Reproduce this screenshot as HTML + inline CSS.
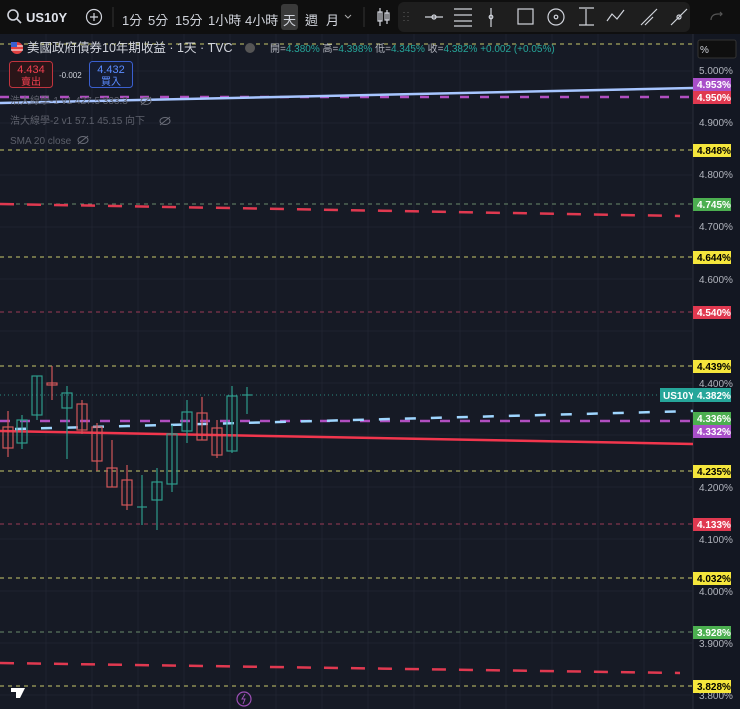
<!DOCTYPE html>
<html><head><meta charset="utf-8"><style>
body{margin:0;width:740px;height:709px;overflow:hidden;background:#0f0f0f;font-family:"Liberation Sans","Noto Sans CJK TC",sans-serif;}
.tb{position:absolute;left:0;top:0;width:740px;height:34px;background:#0f0f0f;color:#d1d4dc;font-size:13px}
.tb span{position:absolute;top:10px}
</style></head><body>
<div class="tb">
<svg width="740" height="34" style="position:absolute;left:0;top:0">
<circle cx="13" cy="15" r="5" fill="none" stroke="#d1d4dc" stroke-width="1.6"/><line x1="17" y1="19" x2="21" y2="23" stroke="#d1d4dc" stroke-width="1.6"/>
<circle cx="94" cy="17" r="7.5" fill="none" stroke="#d1d4dc" stroke-width="1.2"/><path d="M94 13v8M90 17h8" stroke="#d1d4dc" stroke-width="1.2"/>
<line x1="113" y1="7" x2="113" y2="27" stroke="#333" />
<rect x="281" y="4" width="17" height="26" rx="3" fill="#3a3a3a"/>
<path d="M345 15l3 3 3-3" stroke="#aaa" fill="none"/>
<line x1="364" y1="7" x2="364" y2="27" stroke="#333"/>
<path d="M380 8v18M378 12h4v9h-4z M387 10v14M385 13h4v7h-4z" stroke="#d1d4dc" fill="none" stroke-width="1.2"/>
<rect x="398" y="2" width="292" height="30" rx="6" fill="#1e1e1e"/>
<g stroke="#d1d4dc" fill="none" stroke-width="1.2">
<path d="M404 12v1M404 16v1M404 20v1M408 12v1M408 16v1M408 20v1" stroke="#555"/>
<path d="M425 17h18"/><circle cx="434" cy="17" r="2"/>
<path d="M454 9h18M454 15h18M454 21h18M454 26h18"/>
<path d="M491 8v19"/><circle cx="491" cy="17" r="1.8"/>
<rect x="518" y="9" width="15" height="15"/>
<circle cx="556" cy="17" r="8"/><circle cx="556" cy="17" r="1.8"/>
<path d="M579 8h15M586 9v16M579 25h15"/>
<path d="M607 21l5-7 5 5 7-9"/>
<path d="M641 25l16-16M645 25l8-8"/>
<path d="M671 25l16-16"/><circle cx="679" cy="17" r="2"/>
<path d="M711 20c0-4 3-6 7-6h4M720 12l2 2-2 2" stroke="#555"/>
</g>
</svg>
<span style="left:26px;font-weight:bold;color:#e0e3eb">US10Y</span>
<span style="left:122px">1分</span><span style="left:148px">5分</span><span style="left:175px">15分</span><span style="left:208px">1小時</span><span style="left:245px">4小時</span><span style="left:283px">天</span><span style="left:305px">週</span><span style="left:326px">月</span>
</div>
<svg width="740" height="675" style="position:absolute;left:0;top:34px" viewBox="0 34 740 675" font-family="Liberation Sans,Noto Sans CJK TC,sans-serif">
<rect x="0" y="34" width="740" height="675" fill="#161a25"/>
<rect x="693" y="34" width="47" height="675" fill="#131722"/>
<line x1="693" y1="34" x2="693" y2="709" stroke="#2a2e39"/>
<g stroke="#1f2330">
<path d="M46 34v675M92 34v675M138 34v675M184 34v675M230 34v675M276 34v675M322 34v675M368 34v675M414 34v675M460 34v675M506 34v675M552 34v675M598 34v675M644 34v675"/>
<path d="M0 71h693M0 123h693M0 175h693M0 227h693M0 279h693M0 331h693M0 383h693M0 435h693M0 487h693M0 539h693M0 591h693M0 643h693M0 695h693"/>
</g>
<g stroke-dasharray="4 4" stroke-width="1">
<path d="M0 44h693M0 150h693M0 257h693M0 366h693M0 471h693M0 578h693M0 686h693" stroke="#c8c86a"/>
<path d="M0 204h693M0 632h693" stroke="#6a8a6a"/>
<path d="M0 312h693M0 524h693" stroke="#9a3a55"/>
</g>
<line x1="0" y1="395" x2="693" y2="395" stroke="#2a8a80" stroke-dasharray="1 3"/>
<path d="M0 97h693" stroke="#b04ec0" stroke-width="2.5" stroke-dasharray="9 11"/>
<path d="M0 103L693 88" stroke="#a7c5ff" stroke-width="2.5"/>
<path d="M0 204L680 216" stroke="#e03950" stroke-width="2.5" stroke-dasharray="14 13"/>
<path d="M0 663L680 673" stroke="#e03950" stroke-width="2.5" stroke-dasharray="14 13"/>
<path d="M0 421h693" stroke="#b04ec0" stroke-width="2.5" stroke-dasharray="10 10"/>
<path d="M0 431L693 444" stroke="#f2364d" stroke-width="2.5"/>
<path d="M15 429L693 411" stroke="#9fd6ff" stroke-width="2.5" stroke-dasharray="11 15"/>
<g fill="none" stroke-width="1.2">
<g stroke="#d0575a">
<path d="M8 411v46"/><rect x="3" y="427" width="10" height="21"/>
<path d="M52 366v34"/><rect x="47" y="383" width="10" height="2"/>
<path d="M82 400v34"/><rect x="77" y="404" width="10" height="26"/>
<path d="M97 423v48"/><rect x="92" y="427" width="10" height="34"/>
<path d="M112 440v47"/><rect x="107" y="468" width="10" height="19"/>
<path d="M127 465v45"/><rect x="122" y="480" width="10" height="25"/>
<path d="M202 397v43"/><rect x="197" y="413" width="10" height="27"/>
<path d="M217 420v38"/><rect x="212" y="428" width="10" height="27"/>
</g>
<g stroke="#2f9b8c">
<path d="M22 415v34"/><rect x="17" y="420" width="10" height="23"/>
<path d="M37 376v44"/><rect x="32" y="376" width="10" height="39"/>
<path d="M67 386v73"/><rect x="62" y="393" width="10" height="15"/>
<path d="M142 475v50"/><path d="M137 507h10"/>
<path d="M157 468v62"/><rect x="152" y="482" width="10" height="18"/>
<path d="M172 425v67"/><rect x="167" y="434" width="10" height="50"/>
<path d="M187 400v43"/><rect x="182" y="412" width="10" height="19"/>
<path d="M232 386v67"/><rect x="227" y="396" width="10" height="55"/>
<path d="M247 387v27"/><path d="M242 395h10"/>
</g>
</g>
<g font-size="10" fill="#b2b5be">
<text x="699" y="74">5.000%</text><text x="699" y="126">4.900%</text><text x="699" y="178">4.800%</text><text x="699" y="230">4.700%</text><text x="699" y="283">4.600%</text><text x="699" y="387">4.400%</text><text x="699" y="491">4.200%</text><text x="699" y="543">4.100%</text><text x="699" y="595">4.000%</text><text x="699" y="647">3.900%</text><text x="699" y="699">3.800%</text>
</g>
<rect x="698" y="40" width="38" height="18" rx="2" fill="#0f0f0f" stroke="#333"/><text x="700" y="53" font-size="10" fill="#d1d4dc">%</text>
<g font-size="10" font-weight="bold">
<rect x="693" y="78" width="38" height="13" fill="#a94fc9"/><text x="697" y="88" fill="#fff">4.953%</text>
<rect x="693" y="91" width="38" height="13" fill="#e03950"/><text x="697" y="101" fill="#fff">4.950%</text>
<g fill="#f5e63c"><rect x="693" y="144" width="38" height="13"/><rect x="693" y="251" width="38" height="13"/><rect x="693" y="360" width="38" height="13"/><rect x="693" y="465" width="38" height="13"/><rect x="693" y="572" width="38" height="13"/><rect x="693" y="680" width="38" height="13"/></g>
<g fill="#000"><text x="697" y="154">4.848%</text><text x="697" y="261">4.644%</text><text x="697" y="370">4.439%</text><text x="697" y="475">4.235%</text><text x="697" y="582">4.032%</text><text x="697" y="690">3.828%</text></g>
<rect x="693" y="198" width="38" height="13" fill="#4caf50"/><text x="697" y="208" fill="#fff">4.745%</text>
<rect x="693" y="626" width="38" height="13" fill="#4caf50"/><text x="697" y="636" fill="#fff">3.928%</text>
<rect x="693" y="306" width="38" height="13" fill="#e03950"/><text x="697" y="316" fill="#fff">4.540%</text>
<rect x="693" y="518" width="38" height="13" fill="#e03950"/><text x="697" y="528" fill="#fff">4.133%</text>
<rect x="660" y="388" width="33" height="14" fill="#26a69a"/><text x="663" y="399" fill="#fff">US10Y</text>
<rect x="693" y="388" width="38" height="14" fill="#26a69a"/><text x="697" y="399" fill="#fff">4.382%</text>
<rect x="693" y="412" width="38" height="13" fill="#4caf50"/><text x="697" y="422" fill="#fff">4.336%</text>
<rect x="693" y="425" width="38" height="13" fill="#a94fc9"/><text x="697" y="435" fill="#fff">4.332%</text>
</g>
<circle cx="17" cy="48" r="6" fill="#e04040"/><path d="M11 46h12M11 50h12" stroke="#fff" stroke-width="1"/><rect x="11" y="42" width="6" height="5" fill="#3a5fcf"/>
<text x="27" y="52" font-size="12.5" fill="#d1d4dc">美國政府債券10年期收益 · 1天 · TVC</text>
<circle cx="250" cy="48" r="5" fill="#555"/>
<text x="270" y="52" font-size="10" fill="#b2b5be">開=<tspan fill="#26a69a">4.380%</tspan> 高=<tspan fill="#26a69a">4.398%</tspan> 低=<tspan fill="#26a69a">4.345%</tspan> 收=<tspan fill="#26a69a">4.382%</tspan> <tspan fill="#26a69a">+0.002 (+0.05%)</tspan></text>
<rect x="9.5" y="61.5" width="43" height="26" rx="3" fill="#2a1518" stroke="#c0343e"/>
<text x="31" y="73" font-size="11" fill="#f04050" text-anchor="middle">4.434</text><text x="31" y="85" font-size="10" fill="#f04050" text-anchor="middle">賣出</text>
<text x="59" y="78" font-size="8" fill="#d1d4dc">-0.002</text>
<rect x="89.5" y="61.5" width="43" height="26" rx="3" fill="#151c30" stroke="#3a5fcf"/>
<text x="111" y="73" font-size="11" fill="#5b8cff" text-anchor="middle">4.432</text><text x="111" y="85" font-size="10" fill="#5b8cff" text-anchor="middle">買入</text>
<g font-size="10" fill="#5d606b">
<text x="10" y="104">浩大線學-1 v1 427.5 333.3</text>
<text x="10" y="124">浩大線學-2 v1 57.1 45.15 向下</text>
<text x="10" y="144">SMA 20 close</text>
</g>
<g stroke="#6a6d78" fill="none"><ellipse cx="146" cy="101" rx="5" ry="3.5"/><path d="M141 105l10-8"/><ellipse cx="165" cy="121" rx="5" ry="3.5"/><path d="M160 125l10-8"/><ellipse cx="83" cy="140" rx="5" ry="3.5"/><path d="M78 144l10-8"/></g>
<path d="M11 688h8v10h-3v-7h-5zM19 688h6l-5 10h-3z" fill="#fff"/><path d="M11 688h8v4h-8z" fill="#fff"/>
<circle cx="244" cy="699" r="7" fill="none" stroke="#9c4fb5" stroke-width="1.2"/><path d="M245 694l-3 5h3l-2 5" stroke="#9c4fb5" fill="none"/>
</svg>
</body></html>
